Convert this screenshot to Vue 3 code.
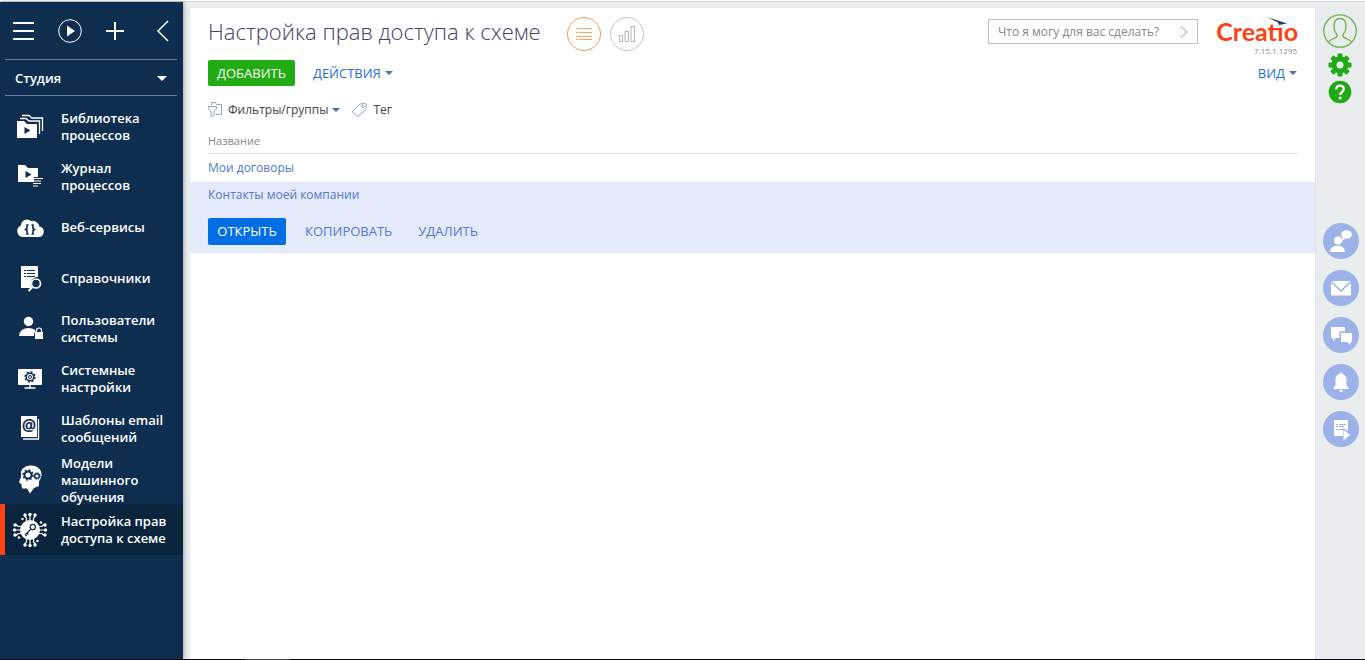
<script setup>
import { ref } from 'vue'

const workplace = ref('Студия')
const query = ref('')

const sections = [
  { id: 'library', title: 'Библиотека процессов' },
  { id: 'log', title: 'Журнал процессов' },
  { id: 'web', title: 'Веб-сервисы', single: true },
  { id: 'lookups', title: 'Справочники', single: true },
  { id: 'users', title: 'Пользователи системы' },
  { id: 'settings', title: 'Системные настройки' },
  { id: 'email', title: 'Шаблоны email сообщений' },
  { id: 'ml', title: 'Модели машинного обучения', tall: true },
  { id: 'rights', title: 'Настройка прав доступа к схеме', active: true }
]

const channels = [
  { id: 'contact', title: 'Звонки' },
  { id: 'mail', title: 'Почта' },
  { id: 'feed', title: 'Лента' },
  { id: 'bell', title: 'Уведомления' },
  { id: 'process', title: 'Задачи по процессам' }
]

const spokes = [0, 90, 180, 270]
const teeth = [0, 45, 90, 135, 180, 225, 270, 315]
</script>

<template>
  <div class="app">
    <div class="body">
      <nav class="side">
        <div class="side-top">
          <button aria-label="Меню">
            <svg width="22" height="22"><path d="M0 3h21M0 11h21M0 19h21" stroke="#fff" stroke-width="2" /></svg>
          </button>
          <button aria-label="Запустить процесс">
            <svg width="24" height="24"><circle cx="12" cy="12" r="11.3" fill="none" stroke="#fff" /><path d="M9 6.5v11l8-5.500z" fill="#fff" /></svg>
          </button>
          <button aria-label="Добавить запись">
            <svg width="18" height="18"><path d="M0 9h18M9 0v18" stroke="#fff" stroke-width="2" /></svg>
          </button>
          <button class="collapse" aria-label="Свернуть">
            <svg width="12" height="22"><path d="M11 1L1 11l10 10" fill="none" stroke="#fff" stroke-width="1.500" /></svg>
          </button>
        </div>
        <div class="workplace">
          <select v-model="workplace" aria-label="Рабочее место">
            <option>Студия</option>
          </select>
          <svg class="workplace-caret" width="10" height="5"><path d="M0 0h10L5 5z" fill="#fff" /></svg>
        </div>
        <a
          v-for="s in sections"
          :key="s.id"
          href="#"
          class="section"
          :class="{ single: s.single, tall: s.tall, active: s.active }"
        >
          <svg class="section-icon" width="36" height="36" viewBox="0 0 36 36" fill="#fff">
            <g v-if="s.id === 'library'">
              <path d="M5 12h7l3 3h10v14H5z" />
              <path d="M8 9.500h6l3 2.500h10.500v13M10 6.500h7l3 2.500h10.500v13" fill="none" stroke="#fff" stroke-width="1.300" />
              <path d="M12.500 18v7l6-3.500z" fill="#0e2e50" />
            </g>
            <g v-else-if="s.id === 'log'">
              <path d="M6 6h7l3 3h10v9h-4v5H6z" />
              <path d="M13.500 12v7l6-3.500z" fill="#0e2e50" />
              <path d="M21 19.500h10M21 22h8M21 24.500h8M21 27h5" stroke="#fff" />
            </g>
            <g v-else-if="s.id === 'web'">
              <path d="M10.500 27a6 6 0 0 1-1.500-11.500 6 6 0 0 1 10-4.500 7 7 0 0 1 8.500 5.500 5.300 5.300 0 0 1-1 10.500z" />
              <path d="M16.500 15h-1.500v3.500l-1.500 1 1.500 1V24h1.500M19.500 15H21v3.500l1.500 1-1.500 1V24h-1.500" fill="none" stroke="#0e2e50" stroke-width="1.600" />
            </g>
            <g v-else-if="s.id === 'lookups'">
              <path d="M9 5h17v11a7 7 0 0 0-6 11H9z" />
              <path d="M12 9.500h2m1 0h8M12 12.500h2m1 0h8M12 15.500h2m1 0h8" stroke="#0e2e50" />
              <circle cx="24" cy="22.500" r="4.500" fill="#0e2e50" stroke="#fff" stroke-width="1.600" />
              <path d="M21 25.500L16.500 30" stroke="#fff" stroke-width="2" />
            </g>
            <g v-else-if="s.id === 'users'">
              <circle cx="16.500" cy="10.500" r="4.700" />
              <path d="M7 25q1-8 9.500-8 5 0 7.500 3-2 1-2 5z" />
              <path d="M23 21h8v7h-8z" />
              <path d="M24.500 21v-1.500a2.500 2.500 0 0 1 5 0V21" fill="none" stroke="#fff" stroke-width="1.200" />
            </g>
            <g v-else-if="s.id === 'settings'">
              <rect x="6" y="8" width="24" height="16" rx="1" />
              <path d="M18 23v4M12.500 27h11" stroke="#fff" stroke-width="1.400" />
              <circle cx="18" cy="16" r="3.800" fill="none" stroke="#0e2e50" stroke-width="1.500" />
              <circle cx="18" cy="16" r="5" fill="none" stroke="#0e2e50" stroke-width="1.300" stroke-dasharray="2 1.900" />
              <circle cx="18" cy="16" r="1.500" fill="none" stroke="#0e2e50" />
            </g>
            <g v-else-if="s.id === 'email'">
              <path d="M9 5h16v21H9z" />
              <path d="M26.500 8v20H11" fill="none" stroke="#fff" stroke-width="1.300" />
              <text x="17" y="20" text-anchor="middle" class="at">@</text>
            </g>
            <g v-else-if="s.id === 'ml'">
              <path d="M9 10C10 6 14 3.500 19 3.500c7 0 11 4.500 10.500 10-.3 3-2 4-2.500 6.500v4l-5 2-4 5.500-3-5H10l-.500-4L7 20l2-5z" />
              <circle cx="16" cy="13" r="3.500" fill="none" stroke="#0e2e50" stroke-width="2" />
              <circle cx="16" cy="13" r="5" fill="none" stroke="#0e2e50" stroke-width="1.400" stroke-dasharray="2 1.900" />
              <circle cx="25" cy="14" r="2.300" fill="none" stroke="#0e2e50" stroke-width="1.500" />
              <circle cx="25" cy="14" r="3.300" fill="none" stroke="#0e2e50" stroke-dasharray="1.300 1.300" />
            </g>
            <g v-else>
              <circle cx="18" cy="18" r="10" />
              <g v-for="a in spokes" :key="a" :transform="`rotate(${a} 18 18)`">
                <path d="M18 8V3M14.500 9V6L12.500 4M21.500 9V6l2-2" fill="none" stroke="#fff" stroke-width="1.200" />
                <circle cx="18" cy="2.500" r="1.700" />
                <circle cx="13" cy="3" r="1.700" />
                <circle cx="23" cy="3" r="1.700" />
                <circle cx="10.500" cy="7" r="1.200" />
              </g>
              <circle cx="20.800" cy="15" r="2.600" fill="none" stroke="#0e2e50" stroke-width="1.200" />
              <path d="M19 17l-6 6M15 21l1.500 1.500M13 22.500l1.700 1.500" fill="none" stroke="#0e2e50" stroke-width="1.200" />
            </g>
          </svg>
          <span>{{ s.title }}</span>
        </a>
      </nav>

      <main class="panel">
        <header class="head">
          <h1>Настройка прав доступа к схеме</h1>
          <div class="views">
            <button class="view on" aria-label="Список">
              <svg width="16" height="14"><path d="M0 1.500h2m1 0h13M0 5.500h2m1 0h13M0 9.500h2m1 0h13M0 12.500h2m1 0h13" stroke="#f7a468" /></svg>
            </button>
            <button class="view" aria-label="Аналитика">
              <svg width="16" height="16"><path d="M.5 9.500h3v6h-3zM6 5.500h3.500v10H6zM12 .5h3.500v15H12z" fill="none" stroke="#b5b5b5" /></svg>
            </button>
          </div>
          <div class="search">
            <input v-model="query" aria-label="Командная строка" placeholder="Что я могу для вас сделать?" />
            <button aria-label="Выполнить">
              <svg width="8" height="12"><path d="M1 1l6 5-6 5" fill="none" stroke="#999" /></svg>
            </button>
          </div>
          <div class="brand">
            <div class="logo">
              <span>Creatıo</span>
              <svg class="dart" width="20" height="9"><path d="M0 0L20 6.500l-8 1.500-1-2.500z" fill="#1b3f6e" /></svg>
            </div>
            <div class="version">7.15.1.1295</div>
          </div>
        </header>

        <div class="actions">
          <button class="add">ДОБАВИТЬ</button>
          <button class="link">ДЕЙСТВИЯ<i class="caret"></i></button>
          <button class="link right">ВИД<i class="caret"></i></button>
        </div>

        <div class="filters">
          <button>
            <svg width="14" height="15" fill="none" stroke="#8fa3c0"><path d="M3.500 3V.5h4l1 2h5v10H8M.5 4.500h8v2L6 9.500v4l-3 1V9.500l-2.500-3z" /></svg>
            Фильтры/группы<i class="caret"></i>
          </button>
          <button>
            <svg width="16" height="14" fill="none" stroke="#8fa3c0"><path d="M9 1l5-.5 1.500 1-.5 5-8 7-6-5z" /><circle cx="12" cy="3.500" r="1.300" /></svg>
            Тег
          </button>
        </div>

        <table>
          <thead>
            <tr><th><div>Название</div></th></tr>
          </thead>
          <tbody>
            <tr><td><a href="#">Мои договоры</a></td></tr>
            <tr class="selected">
              <td>
                <a href="#">Контакты моей компании</a>
                <div class="row-actions">
                  <button class="open">ОТКРЫТЬ</button>
                  <button>КОПИРОВАТЬ</button>
                  <button>УДАЛИТЬ</button>
                </div>
              </td>
            </tr>
          </tbody>
        </table>
      </main>

      <aside class="rail">
        <div class="tools">
          <button aria-label="Профиль">
            <svg width="34" height="34" fill="none" stroke="#68b545" stroke-width="1.300"><circle cx="17" cy="17" r="16.200" /><path d="M5.500 28c1-2.500 6-3 8-5 1-1 .5-2.500 0-3.500-2-1.500-2.500-4-2.500-7 0-5 2-8 6-8s6 3 6 8c0 3-.5 5.500-2.500 7-.5 1-1 2.500 0 3.500 2 2 7 2.500 8 5" /></svg>
          </button>
          <button aria-label="Дизайнер системы">
            <svg width="24" height="24" fill="#1fa914">
              <rect v-for="a in teeth" :key="a" x="9.500" y="0.500" width="5" height="6" rx="1" :transform="`rotate(${a} 12 12)`" />
              <circle cx="12" cy="12" r="6" fill="none" stroke="#1fa914" stroke-width="5" />
            </svg>
          </button>
          <button aria-label="Справка">
            <svg width="24" height="24"><circle cx="12" cy="12" r="11.300" fill="#1fa914" /><path d="M8.300 9.500c0-5 7.500-5 7.500-.5 0 3-3.600 3-3.600 6" fill="none" stroke="#fff" stroke-width="2.300" /><circle cx="12.200" cy="18" r="1.500" fill="#fff" /></svg>
          </button>
        </div>
        <div class="channels">
          <button v-for="c in channels" :key="c.id" :aria-label="c.title">
            <svg width="36" height="36" fill="#fff">
              <g v-if="c.id === 'contact'">
                <circle cx="15" cy="17.500" r="4" />
                <path d="M7 29q.5-6.500 7.500-6.500T22 29z" />
                <ellipse cx="23.500" cy="11.500" rx="5.500" ry="4.200" />
                <path d="M20 13l-1 5 4-3z" />
              </g>
              <g v-else-if="c.id === 'mail'">
                <path d="M8 11h20v14.500H8z" />
                <path d="M8 11.500l10 9.500 10-9.500" fill="none" stroke="#9cb2e8" stroke-width="1.600" />
              </g>
              <g v-else-if="c.id === 'feed'">
                <path d="M8 10h14v4.500h-5.500V21H13l-3 3v-3H8z" />
                <path d="M18 16h11v9h-1.500v3L24 25h-6z" />
              </g>
              <g v-else-if="c.id === 'bell'">
                <path d="M18 8.500q1.500 0 1.500 1.500 4 1.200 4 6v5l2.500 4H10l2.500-4v-5q0-4.800 4-6 0-1.500 1.500-1.500zM16 26h4q0 2-2 2t-2-2z" />
              </g>
              <g v-else>
                <path d="M11 9h14v11l-5-3v8h-9z" />
                <path d="M13 13.500h2m1 0h7M13 15.500h2m1 0h5M13 18.500h2m1 0h4" stroke="#9cb2e8" />
                <path d="M20.500 18.500v11L27 24z" />
              </g>
            </svg>
          </button>
        </div>
      </aside>
    </div>
    <div class="edge"></div>
  </div>
</template>

<style>
body {
  margin: 0;
}
</style>

<style scoped>
.app {
  display: flex;
  flex-direction: column;
  min-height: 100vh;
  box-sizing: border-box;
  border-top: 1px solid #fff;
  background: #e9eded;
  font-family: "Open Sans", sans-serif;
  font-size: 13px;
  color: #444;
}
.body {
  flex: 1;
  display: flex;
  border-top: 1px solid #d5d9d9;
}
.edge {
  height: 1px;
  background: linear-gradient(90deg, #05060c 245px, #46464a 245px, #46464a 290px, #05060c 290px);
}
button {
  display: flex;
  align-items: center;
  padding: 0;
  border: 0;
  background: none;
  font: inherit;
  color: inherit;
  cursor: pointer;
}
svg {
  display: block;
  flex: none;
}
a {
  text-decoration: none;
}

.side {
  width: 183px;
  flex: none;
  background: #0e2e50;
  box-shadow: 1px 0 4px rgba(0, 0, 0, 0.3);
  color: #fff;
  font-weight: 600;
}
.side-top {
  display: flex;
  align-items: center;
  gap: 24px;
  height: 57px;
  padding: 0 14px 0 13px;
}
.side-top button:first-child {
  margin-right: -1px;
}
.collapse {
  margin-left: auto;
}
.workplace {
  position: relative;
  margin: 0 6px 6px 5px;
  border: solid #6e8196;
  border-width: 1px 0;
}
.workplace select {
  display: block;
  width: 100%;
  height: 35px;
  padding: 0 10px;
  border: 0;
  appearance: none;
  background: none;
  color: #fff;
  font: inherit;
}
.workplace-caret {
  position: absolute;
  right: 10px;
  top: 16px;
  pointer-events: none;
}
.section {
  display: flex;
  align-items: center;
  gap: 13px;
  box-sizing: border-box;
  min-height: 50px;
  padding: 0 12px;
  line-height: 17px;
  color: #fff;
}
.section.single {
  min-height: 51px;
}
.section.tall {
  height: 50px;
  padding-top: 2px;
}
.section.active {
  min-height: 51px;
  padding-left: 7px;
  border-left: 5px solid #ff4013;
  background: #0a243e;
}
.at {
  font: 700 16px "Open Sans", sans-serif;
  fill: #0e2e50;
}

.panel {
  flex: 1;
  margin: 6px 0 0 7px;
  border-right: 1px solid #dfe3e3;
  border-radius: 2px 2px 0 0;
  background: #fff;
}
.head {
  display: flex;
  align-items: flex-start;
  height: 52px;
  padding: 0 17px 0 18px;
}
h1 {
  margin: 8px 26px 0 0;
  font-size: 22px;
  line-height: 30px;
  font-weight: 300;
  color: #444066;
  white-space: nowrap;
}
.views {
  display: flex;
  gap: 9px;
  margin-top: 9px;
}
.view {
  justify-content: center;
  width: 34px;
  height: 34px;
  border: 1px solid #c4c4c4;
  border-radius: 50%;
}
.view.on {
  border-color: #f59a55;
}
.search {
  display: flex;
  align-items: center;
  box-sizing: border-box;
  width: 210px;
  height: 25px;
  margin: 11px 18px 0 auto;
  padding: 0 9px;
  border: 1px solid #c2c2c2;
}
.search input {
  flex: 1;
  min-width: 0;
  padding: 0;
  border: 0;
  outline: 0;
  font: 12px "Open Sans", sans-serif;
}
.search input::placeholder {
  color: #888;
}
.brand {
  width: 82px;
  text-align: right;
}
.logo {
  position: relative;
  margin-top: 7px;
  font: 700 25px/32px Lato, sans-serif;
  color: #ff4013;
  white-space: nowrap;
}
.dart {
  position: absolute;
  right: 11px;
  top: 2px;
}
.version {
  padding-right: 1px;
  font-size: 8px;
  line-height: 8px;
  color: #888;
}

.actions {
  display: flex;
  height: 26px;
  padding: 0 18px;
}
.add,
.open {
  justify-content: center;
  border-radius: 2px;
  color: #fff;
}
.add {
  width: 87px;
  margin-right: 18px;
  background: #22ac14;
}
.link {
  color: #1f6fd6;
}
.right {
  margin-left: auto;
}
.caret {
  margin-left: 4px;
  border: solid transparent;
  border-width: 4px 4px 0;
  border-top-color: #4d6fa3;
}

.filters {
  display: flex;
  gap: 11px;
  padding: 14px 18px 14px;
  font-size: 12px;
}
.filters button {
  height: 19px;
}
.filters svg {
  margin-right: 6px;
}

table {
  width: 100%;
  border-collapse: collapse;
}
th,
td {
  padding: 0 17px 0 18px;
  text-align: left;
  font-weight: 400;
}
th div {
  padding-bottom: 5px;
  border-bottom: 1px solid #dcdcdc;
  font-size: 11px;
  line-height: 15px;
  color: #888;
}
td {
  padding-top: 5px;
  padding-bottom: 5px;
  font-size: 12px;
  line-height: 18px;
}
td a,
.row-actions {
  color: #5578d0;
}
.selected {
  background: #e3eafa;
}
.selected td {
  padding-top: 4px;
  padding-bottom: 8px;
}
.row-actions {
  display: flex;
  margin-top: 14px;
  font-size: 13px;
}
.row-actions button {
  height: 27px;
  margin-right: 26px;
  padding-bottom: 2px;
}
.row-actions .open {
  width: 78px;
  margin-right: 19px;
  background: #006fe6;
}

.rail {
  width: 49px;
  flex: none;
}
.tools {
  display: flex;
  flex-direction: column;
  align-items: center;
  gap: 3px;
  padding: 12px 1px 0 0;
}
.tools button:first-child {
  margin-bottom: 2px;
}
.channels {
  display: flex;
  flex-direction: column;
  align-items: center;
  gap: 11px;
  margin-top: 119px;
  padding-left: 1px;
}
.channels button {
  border-radius: 50%;
  background: #9cb2e8;
}
</style>
